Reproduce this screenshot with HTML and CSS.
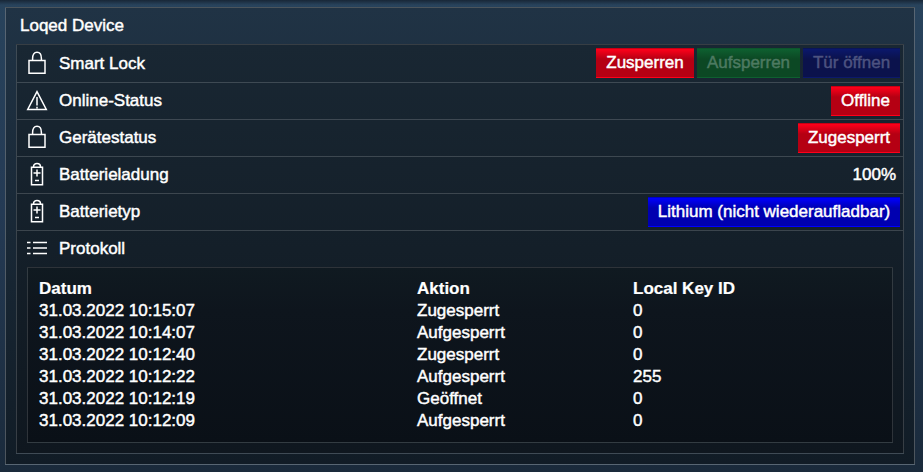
FILE: index.html
```
<!DOCTYPE html>
<html lang="de">
<head>
<meta charset="utf-8">
<title>Loqed Device</title>
<link rel="stylesheet" href="styles.css">
</head>
<body>
<svg class="defs" width="0" height="0">
  <symbol id="lock" viewBox="0 0 22 26"><path d="M3 9.5h16v12.8H3zM6.6 9.5V7.5C6.6 3.5 8.2 1.3 11 1.3s4.4 2.2 4.4 6.2v2"/></symbol>
  <symbol id="warning" viewBox="0 0 22 26"><path d="M11 3.6L20.3 21.5H1.7zM11 9v8.5M11 18.8v1.7"/></symbol>
  <symbol id="battery" viewBox="0 0 22 26"><path d="M5.5 5.2h11v17.5h-11zM7.5 5c0-2.4 1.5-3.4 3.5-3.4s3.5 1 3.5 3.4M11 7.5v7M7.5 11h7M9 18.5h4"/></symbol>
  <symbol id="list" viewBox="0 0 22 26"><path d="M1 6.5h3.5M7 6.5h14M1 12h3.5M7 12h14M1 17.5h3.5M7 17.5h14"/></symbol>
</svg>
<main class="panel">
  <h1 class="title">Loqed Device</h1>
  <section class="content">
    <div class="row first"><svg class="icon"><use href="#lock"/></svg><span class="label">Smart Lock</span>
      <div class="actions"><button class="btn red w98">Zusperren</button><button class="btn green w103" disabled>Aufsperren</button><button class="btn navy w97" disabled>Tür öffnen</button></div></div>
    <div class="row"><svg class="icon"><use href="#warning"/></svg><span class="label">Online-Status</span><div class="actions"><span class="btn red w69">Offline</span></div></div>
    <div class="row"><svg class="icon"><use href="#lock"/></svg><span class="label">Gerätestatus</span><div class="actions"><span class="btn red w102">Zugesperrt</span></div></div>
    <div class="row"><svg class="icon"><use href="#battery"/></svg><span class="label">Batterieladung</span><span class="value">100%</span></div>
    <div class="row"><svg class="icon"><use href="#battery"/></svg><span class="label">Batterietyp</span><div class="actions"><span class="btn blue w252">Lithium (nicht wiederaufladbar)</span></div></div>
    <div class="row last"><svg class="icon"><use href="#list"/></svg><span class="label">Protokoll</span></div>
    <div class="log">
      <table>
        <thead><tr><th class="date">Datum</th><th class="action">Aktion</th><th>Local Key ID</th></tr></thead>
        <tbody>
          <tr><td>31.03.2022 10:15:07</td><td>Zugesperrt</td><td>0</td></tr>
          <tr><td>31.03.2022 10:14:07</td><td>Aufgesperrt</td><td>0</td></tr>
          <tr><td>31.03.2022 10:12:40</td><td>Zugesperrt</td><td>0</td></tr>
          <tr><td>31.03.2022 10:12:22</td><td>Aufgesperrt</td><td>255</td></tr>
          <tr><td>31.03.2022 10:12:19</td><td>Geöffnet</td><td>0</td></tr>
          <tr><td>31.03.2022 10:12:09</td><td>Aufgesperrt</td><td>0</td></tr>
        </tbody>
      </table>
    </div>
  </section>
</main>
</body>
</html>
```
FILE: styles.css
```
* { box-sizing: border-box; }
html { height: 100%; }
body {
  margin: 0;
  height: 472px;
  padding: 7px 8px 7px 5px;
  overflow: hidden;
  background: linear-gradient(rgba(20, 32, 46, .8), rgba(20, 32, 46, 0) 5px), linear-gradient(#28435c, #243a54 45%, #1a2a3b);
  color: #fff;
  font: 17px/22px "Liberation Sans", Arial, sans-serif;
  -webkit-text-stroke: .45px currentColor;
}
.defs { display: block; position: absolute; }
.panel {
  height: 458px;
  padding: 0 10px;
  border: 1px solid rgba(255, 255, 255, .25);
  background: linear-gradient(#203345, #111c26);
}
.title { margin: 0; padding: 7px 0 0 4px; height: 36px; font-size: 17px; font-weight: 400; line-height: 22px; }
.content {
  height: 410px;
  border: 1px solid rgba(255, 255, 255, .17);
  background: linear-gradient(#192733, #0f171f);
}
.row {
  display: flex;
  align-items: center;
  height: 37px;
  padding: 0 3px 0 9px;
  border-bottom: 1px solid rgba(255, 255, 255, .17);
}
.first { height: 38px; }
.last { height: 36px; border: 0; }
.icon { width: 22px; height: 26px; fill: none; stroke: #fff; stroke-width: 1.5; }
.label { margin-left: 11px; }
.actions { display: flex; gap: 3px; margin-left: auto; }
.first .actions { margin-bottom: 1px; }
.value { margin-left: auto; padding-right: 4px; }
.btn {
  display: block;
  height: 30px;
  margin: 0;
  padding: 0;
  border: 0;
  color: #fff;
  font: inherit;
  line-height: 30px;
  text-align: center;
  white-space: nowrap;
  -webkit-text-stroke: inherit;
}
.red { background: linear-gradient(#c70014 0 1px, #ff001a 1px, #b50013 11px, #b50013 29px, #ff001a 29px); }
.green { color: #4d7a61; background: linear-gradient(#0d552c 0 1px, #0e6030 1px, #0c4824 11px, #0c4824 29px, #0e6030 29px); }
.navy { color: #4d5380; background: linear-gradient(#0a1558 0 1px, #0b186c 1px, #0b124c 11px, #0b124c 29px, #0b186c 29px); }
.blue { background: linear-gradient(#0000c4 0 1px, #0000ff 1px, #0000b0 11px, #0000b0 29px, #0000ff 29px); }
.w98 { width: 98px; }
.w103 { width: 103px; }
.w97 { width: 97px; }
.w69 { width: 69px; }
.w102 { width: 102px; }
.w252 { width: 252px; }
.log {
  height: 176px;
  margin: 0 10px;
  padding: 10px 11px;
  border: 1px solid rgba(255, 255, 255, .15);
  background: linear-gradient(#101a21, #0e151d 25%, #0a1017);
}
table { width: 100%; table-layout: fixed; border-collapse: collapse; }
th, td { padding: 0; height: 22px; text-align: left; }
th { font-weight: 700; -webkit-text-stroke: .2px currentColor; }
.date { width: 378px; }
.action { width: 216px; }
```
